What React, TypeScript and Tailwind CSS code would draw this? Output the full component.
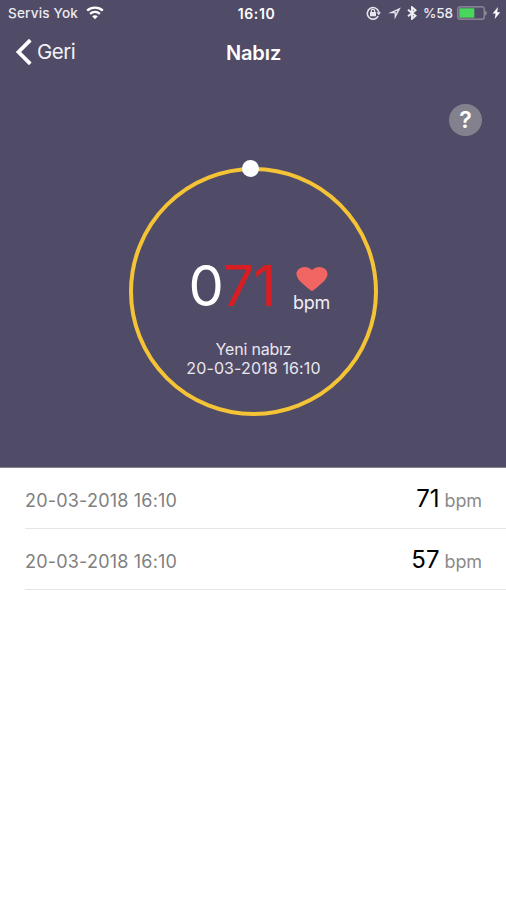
import React from "react";

const readings = [
  { date: "20-03-2018 16:10", value: "71" },
  { date: "20-03-2018 16:10", value: "57" },
];

function WifiIcon() {
  return (
    <svg width="18" height="14" viewBox="0 0 18 14" fill="none" stroke="#fff" strokeWidth="2.3">
      <path d="M1.2 4.7C5.5.7 12.5.7 16.8 4.7" />
      <path d="M4.1 7.8c2.8-2.5 7-2.5 9.8 0" />
      <path d="M9 13.2 6.2 10.3c1.6-1.4 4-1.4 5.6 0z" fill="#fff" stroke="none" />
    </svg>
  );
}

function RotationLockIcon() {
  return (
    <svg width="15" height="14" viewBox="0 0 15 14" fill="none" stroke="#e6e4ec" strokeWidth="1.6">
      <path d="M12.2 10.2A5.8 5.8 0 1 1 12.8 6.2" />
      <path d="M10.4 6.2H15l-2.2 3z" fill="#e6e4ec" stroke="none" />
      <path d="M5.3 6.5V5.1a1.7 1.7 0 0 1 3.4 0v1.4" strokeWidth="1.2" />
      <rect x="4" y="6" width="6" height="4.3" rx=".5" fill="#e6e4ec" stroke="none" />
    </svg>
  );
}

function StatusBar() {
  return (
    <div className="flex h-[26px] items-center justify-between pl-[8px] pr-[5px] text-[13.5px] text-[#eeecf2]">
      <div className="flex w-[180px] items-center gap-[7px]">
        <span className="w-[71px] whitespace-nowrap pt-px font-medium tracking-[0.2px]">Servis Yok</span>
        <WifiIcon />
      </div>
      <span className="pl-[4px] text-[14px] font-semibold tracking-[0.6px] text-white">16:10</span>
      <div className="flex w-[180px] items-center justify-end">
        <RotationLockIcon />
        <svg className="ml-[7px]" width="13" height="13" viewBox="0 0 13 13">
          <path fillRule="evenodd" d="M12.8.4.2 6.2h6.4v6.4zM9.5 3.6 7.8 6.9V5.1H6.4z" fill="#e6e4ec" />
        </svg>
        <svg className="ml-[6px]" width="10" height="14" viewBox="0 0 10 14" fill="none" stroke="#f0eef5" strokeWidth="1.9">
          <path d="m1 3.8 7.5 6L5 12.8V1.2l3.5 3L1 10.2" />
        </svg>
        <span className="ml-[6px] font-medium tracking-[-0.1px]">%58</span>
        <svg className="ml-[4px]" width="32" height="14" viewBox="0 0 32 14">
          <rect x=".8" y=".8" width="26.4" height="12.4" rx="2" fill="none" stroke="#96929f" strokeWidth="1.2" />
          <rect x="2.3" y="2.3" width="15" height="9.4" fill="#48d65c" />
          <path d="M28.2 4.2q3.4 2.8 0 5.6z" fill="#96929f" />
        </svg>
        <svg className="ml-[3px]" width="9" height="12" viewBox="0 0 9 12">
          <path d="M6 0 .6 6.6h3L2.8 12l5.4-6.8h-3z" fill="#fff" />
        </svg>
      </div>
    </div>
  );
}

function NavBar() {
  return (
    <div className="flex h-[52px] items-center pl-[15px] text-white">
      <div className="flex w-[180px] items-center">
        <svg width="18" height="28" viewBox="0 0 18 28" fill="none" stroke="#fff" strokeWidth="3.8">
          <path d="M15.3 2.2 3.5 14l11.8 11.8" />
        </svg>
        <span className="ml-[4px] pt-px text-[20.5px] tracking-[-0.5px] text-[#f3f2f7]">Geri</span>
      </div>
      <h1 className="w-[117px] pt-px text-center text-[20px] font-semibold tracking-[-0.1px]">Nabız</h1>
    </div>
  );
}

function PulseRing() {
  return (
    <div className="relative ml-[129px] mt-[31px] flex h-[249px] w-[249px] flex-col items-center rounded-full border-4 border-[#f5c336]">
      <span className="absolute left-[109px] top-[-11px] h-[17px] w-[17px] rounded-full bg-white" />
      <div className="mt-[80px] flex h-[74px] w-[148px] pl-[9px]">
        <div className="flex w-[102px] shrink-0 whitespace-nowrap text-[56px] leading-[70px]">
          <span className="w-[34px] text-white">0</span>
          <span className="tracking-[-0.8px] text-[#d81e22]">71</span>
        </div>
        <div className="flex w-[42px] shrink-0 flex-col items-center pt-[15px]">
          <svg className="shrink-0" width="32" height="26" viewBox="0 0 32 26">
            <path d="M16 25.3C12.2 22.2.4 14.5.4 7.8.4 1.5 10.2-2.1 16 4.1 21.8-2.1 31.6 1.5 31.6 7.8c0 6.7-11.8 14.4-15.6 17.5z" fill="#f16563" />
          </svg>
          <span className="mt-[-1px] text-[18px] leading-[24px] tracking-[-0.2px] text-[#f0eef5]">bpm</span>
        </div>
      </div>
      <p className="mt-[15px] text-center text-[16px] leading-[19px] tracking-[0.12px] text-[#e9e6ef]">
        <span className="tracking-[-0.2px]">Yeni nabız</span><br />20-03-2018 16:10
      </p>
    </div>
  );
}

export default function App() {
  return (
    <main className="h-[900px] w-[506px] overflow-hidden bg-white font-['Inter',sans-serif]">
      <section className="h-[468px] border-b border-[#85818f] bg-[#504b66]">
        <StatusBar />
        <NavBar />
        <div className="flex justify-end pr-[24px] pt-[26px]">
          <button className="flex h-[32px] w-[33px] items-center justify-center rounded-full bg-[#84818f] pt-px text-[23px] font-semibold text-white">?</button>
        </div>
        <PulseRing />
      </section>
      <ul className="pl-[25px]">
        {readings.map((reading) => (
          <li key={reading.value} className="flex h-[61px] items-center justify-between border-b border-[#e5e5e7] pr-[24px]">
            <span className="pt-[5px] text-[18px] tracking-[0.2px] text-[#808080]">{reading.date}</span>
            <span className="flex items-baseline gap-[5px] pt-[2px]">
              <span className="text-[24px] text-black">{reading.value}</span>
              <span className="text-[18px] tracking-[-0.1px] text-[#8b8b8b]">bpm</span>
            </span>
          </li>
        ))}
      </ul>
    </main>
  );
}
